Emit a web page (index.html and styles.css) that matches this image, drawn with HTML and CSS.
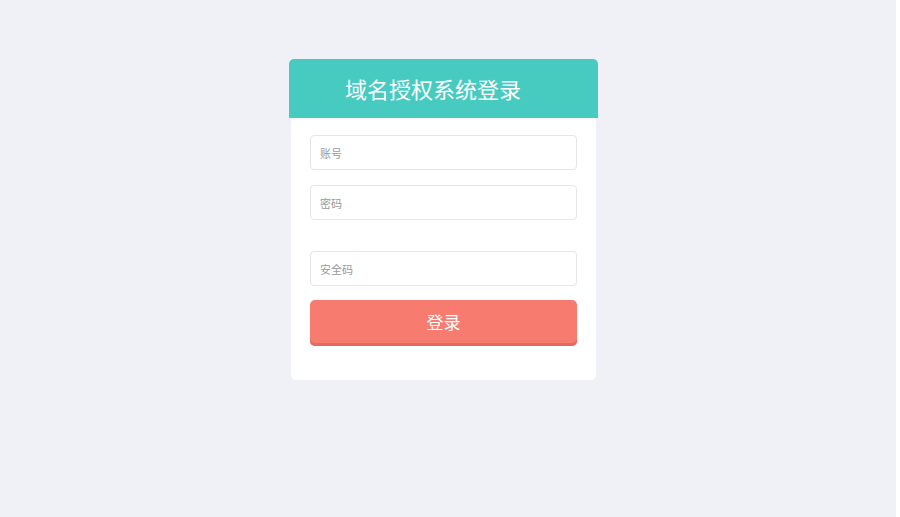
FILE: index.html
```html
<!DOCTYPE html>
<html lang="zh">
<head>
<meta charset="utf-8">
<title>域名授权系统登录</title>
<link rel="stylesheet" href="styles.css">
</head>
<body>
<div class="page">
  <div class="login">
    <div class="login-head">域名授权系统登录</div>
    <form class="login-body">
      <input class="field" type="text" placeholder="账号">
      <input class="field field-pass" type="password" placeholder="密码">
      <input class="field field-code" type="text" placeholder="安全码">
      <button class="btn" type="button">登录</button>
    </form>
  </div>
</div>
</body>
</html>
```
FILE: styles.css
```css
html, body {
  margin: 0;
  padding: 0;
  background: #ffffff;
  font-family: "Noto Sans CJK SC", "Noto Sans", sans-serif;
}
.page {
  width: 896px;
  height: 517px;
  background: #f0f1f6;
  overflow: hidden;
}
.login {
  width: 309px;
  margin: 59px 0 0 289px;
}
.login-head {
  height: 59px;
  background: #47cbc1;
  border-radius: 5px 5px 0 0;
  color: #ffffff;
  font-size: 22px;
  line-height: 59px;
  text-align: center;
  padding-right: 21px;
  box-sizing: border-box;
}
.login-body {
  margin: 0 2px;
  background: #ffffff;
  border-radius: 0 0 5px 5px;
  padding: 17px 19px 34px;
  display: flex;
  flex-direction: column;
}
.field {
  height: 35px;
  box-sizing: border-box;
  border: 1px solid #e6e6e6;
  border-radius: 4px;
  padding: 0 9px;
  font-family: inherit;
  font-size: 11px;
  color: #555;
  background: #fff;
  outline: none;
}
.field::placeholder {
  color: #9a9a9a;
}
.field-pass {
  margin-top: 15px;
}
.field-code {
  margin-top: 31px;
}
.btn {
  margin-top: 14px;
  height: 46px;
  border: none;
  border-radius: 5px;
  background: #f77b6f;
  box-shadow: inset 0 -3px 0 #e36a5f;
  color: #ffffff;
  font-family: inherit;
  font-size: 17px;
  padding: 0 0 3px;
  cursor: pointer;
}
```
